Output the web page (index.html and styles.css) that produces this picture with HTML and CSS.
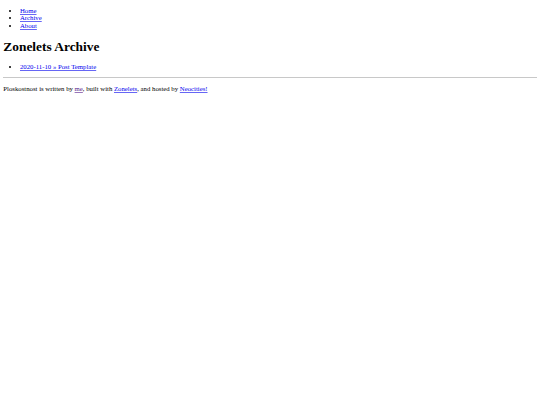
FILE: index.html
```html
<!DOCTYPE html>
<html>
<head>
<meta charset="utf-8">
<title>Zonelets Archive</title>
<link rel="stylesheet" href="styles.css">
</head>
<body>
<ul class="nav">
<li><a href="#">Home</a></li>
<li><a href="#">Archive</a></li>
<li><a href="#">About</a></li>
</ul>
<h1 class="title">Zonelets Archive</h1>
<ul class="posts">
<li><a href="#">2020-11-10 » Post Template</a></li>
</ul>
<hr class="rule">
<p class="footer">Ploskostnost is written by <a class="visited" href="#">me</a>, built with <a href="#">Zonelets</a>, and hosted by <a href="#">Neocities!</a></p>
</body>
</html>
```

FILE: styles.css
```css
html {
  background: #fff;
}
body {
  margin: 0 3.333px 3.333px;
  padding-top: 0.1px;
  font-family: "Liberation Serif", serif;
  font-size: 6.75px;
  line-height: 7.67px;
  color: #000;
}
a {
  color: #0000ee;
  text-decoration-color: rgba(0, 0, 238, 0.6);
}
a.visited {
  color: #551a8b;
  text-decoration-color: rgba(85, 26, 139, 0.6);
}
.nav, .posts {
  margin: 6.667px 0;
  padding-left: 16.667px;
}
.nav {
  margin-top: 6.5px;
}
.title {
  font-size: 13.4px;
  line-height: 15.33px;
  margin: 8.933px 0 9.5px;
}
.posts {
  margin-bottom: 6px;
}
.rule {
  margin: 3.333px 0;
  height: 0;
  border: 0;
  border-top: 1px solid #c8c8c8;
}
.footer {
  margin: 6.667px 0;
}
```
